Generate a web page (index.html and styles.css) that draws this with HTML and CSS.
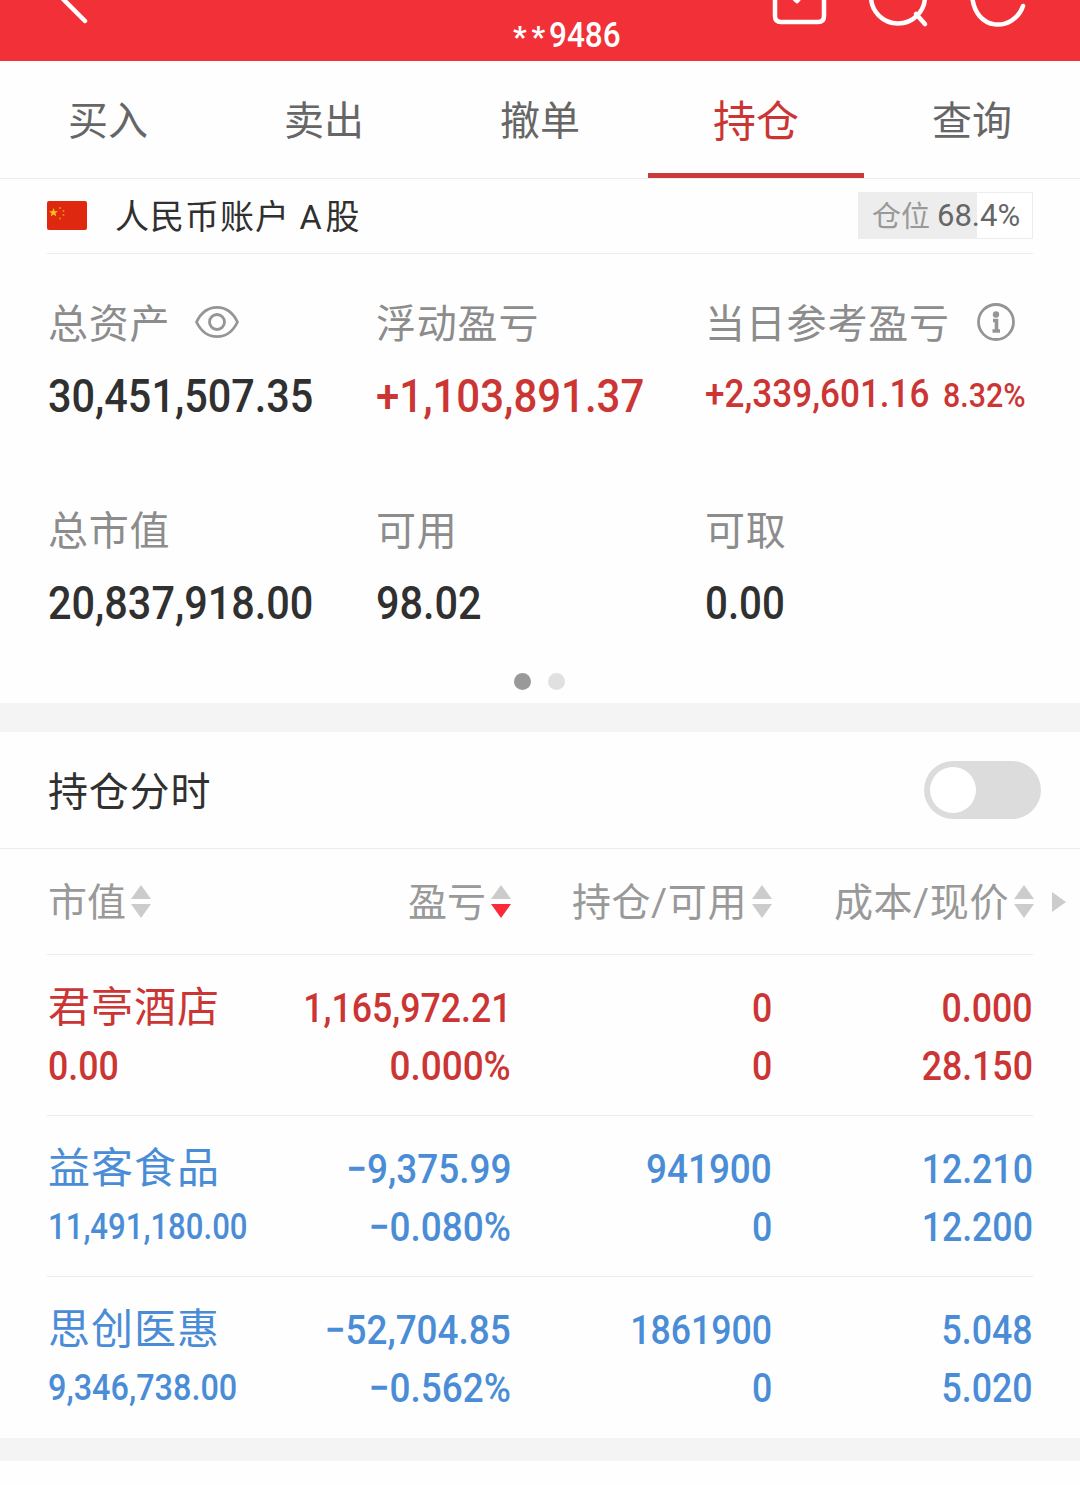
FILE: index.html
```
<!DOCTYPE html>
<html lang="zh-CN">
<head>
    <meta charset="UTF-8" />
    <title>持仓</title>
    <link rel="stylesheet" href="styles.css">
</head>
<body>
    <header class="top-bar">
        <svg class="back" width="48" height="30" viewBox="48 0 48 30"><path d="M49 -15L85 21" /></svg>
        <div class="account-no"><span class="stars">**</span><span class="num">9486</span></div>
        <div class="top-icons">
            <svg width="58" height="30" viewBox="771 0 58 30"><path d="M776 -10V16Q776 22 782 22H819Q825 22 825 16V-10M785 -11L798 1L815 -19" /></svg>
            <svg width="64" height="30" viewBox="867 0 64 30"><circle cx="899" cy="-3.500" r="27" /><path d="M917 14L926 24" /></svg>
            <svg width="60" height="30" viewBox="968 0 60 30"><path d="M972 -6C974 33 1014 32 1023 6" /></svg>
        </div>
    </header>

    <nav class="tabs">
        <a class="tab">买入</a>
        <a class="tab">卖出</a>
        <a class="tab">撤单</a>
        <a class="tab active">持仓</a>
        <a class="tab">查询</a>
    </nav>

    <section class="account">
        <svg class="flag" width="40" height="30" viewBox="0 0 40 30">
            <rect x="0" y="0" width="40" height="29" rx="2" fill="#de2910" />
            <path d="M6.5 7L7.7 10.2H11L8.400 12.2L9.4 15.400L6.5 13.5L3.600 15.400L4.600 12.2L2 10.2H5.300Z" fill="#fcc419" />
            <g fill="#ee8a16"><circle cx="13" cy="7" r="1" /><circle cx="16.5" cy="10" r="1" /><circle cx="16.5" cy="14" r="1" /><circle cx="13" cy="17.500" r="1" /></g>
        </svg>
        <span class="account-name">人民币账户 <span class="market">A股</span></span>
        <div class="position"><span class="position-label">仓位</span><span class="position-value">68.4%</span></div>
    </section>

    <section class="summary">
        <div class="cell">
            <div class="label"><span>总资产</span>
                <svg class="eye" width="44" height="34" viewBox="0 0 44 34"><path d="M1.500 17C11 -2.500 33 -2.500 42.500 17C33 36.500 11 36.500 1.500 17Z" /><circle cx="22" cy="17" r="7.500" /></svg>
            </div>
            <div class="value"><span class="num">30,451,507.35</span></div>
        </div>
        <div class="cell">
            <div class="label"><span>浮动盈亏</span></div>
            <div class="value red"><span class="num wide">+1,103,891.37</span></div>
        </div>
        <div class="cell">
            <div class="label"><span>当日参考盈亏</span>
                <svg class="info" width="40" height="40" viewBox="0 0 40 40"><circle cx="20" cy="20" r="17.500" /><circle class="dot-i" cx="20" cy="12.500" r="3.200" /><path class="stem-i" d="M17 18.500H20.500V29M16.500 29H24" /></svg>
            </div>
            <div class="value red day"><span class="num">+2,339,601.16</span><span class="num rate">8.32%</span></div>
        </div>
        <div class="cell">
            <div class="label"><span>总市值</span></div>
            <div class="value"><span class="num">20,837,918.00</span></div>
        </div>
        <div class="cell">
            <div class="label"><span>可用</span></div>
            <div class="value"><span class="num">98.02</span></div>
        </div>
        <div class="cell">
            <div class="label"><span>可取</span></div>
            <div class="value"><span class="num short">0.00</span></div>
        </div>
    </section>
    <div class="dots"><i class="on"></i><i></i></div>

    <div class="gap"></div>

    <section class="chart-row">
        <span>持仓分时</span>
        <div class="switch"><i></i></div>
    </section>

    <section class="holdings">
        <div class="row head">
            <div><span>市值</span><svg class="sort" width="20" height="34" viewBox="0 0 20 34"><path d="M10 0L20 14H0Z" /><path d="M10 33L0 19H20Z" /></svg></div>
            <div><span>盈亏</span><svg class="sort desc" width="20" height="34" viewBox="0 0 20 34"><path d="M10 0L20 14H0Z" /><path d="M10 33L0 19H20Z" /></svg></div>
            <div><span class="pair">持仓/可用</span><svg class="sort" width="20" height="34" viewBox="0 0 20 34"><path d="M10 0L20 14H0Z" /><path d="M10 33L0 19H20Z" /></svg></div>
            <div><span class="pair">成本/现价</span><svg class="sort" width="20" height="34" viewBox="0 0 20 34"><path d="M10 0L20 14H0Z" /><path d="M10 33L0 19H20Z" /></svg><svg class="more" width="14" height="20" viewBox="0 0 14 20"><path d="M0 0L14 10L0 20Z" /></svg></div>
        </div>
        <div class="row red">
            <div><span class="name">君亭酒店</span><span class="num">0.00</span></div>
            <div><span class="num">1,165,972.21</span><span class="num wide">0.000%</span></div>
            <div><span class="num">0</span><span class="num">0</span></div>
            <div><span class="num">0.000</span><span class="num">28.150</span></div>
        </div>
        <div class="row blue">
            <div><span class="name">益客食品</span><span class="num small">11,491,180.00</span></div>
            <div><span class="num wide">−9,375.99</span><span class="num wide">−0.080%</span></div>
            <div><span class="num wide">941900</span><span class="num">0</span></div>
            <div><span class="num">12.210</span><span class="num">12.200</span></div>
        </div>
        <div class="row blue">
            <div><span class="name">思创医惠</span><span class="num small wide">9,346,738.00</span></div>
            <div><span class="num wide">−52,704.85</span><span class="num wide">−0.562%</span></div>
            <div><span class="num">1861900</span><span class="num">0</span></div>
            <div><span class="num">5.048</span><span class="num">5.020</span></div>
        </div>
    </section>

    <div class="gap bottom"></div>
</body>
</html>
```
FILE: styles.css
```
* {
    box-sizing: border-box;
}
body {
    margin: 0;
    background-color: #fefefe;
    color: #303030;
    font-family: Roboto, "Noto Sans CJK SC", sans-serif;
}
svg {
    display: block;
    flex: none;
}
/* figures are set slightly condensed */
.num {
    display: inline-block;
    font-family: Roboto, sans-serif;
    font-weight: 500;
    white-space: nowrap;
    transform: scaleX(0.9);
    transform-origin: left center;
}
.red {
    color: #cb3534;
}
.blue {
    color: #4a8dd6;
}

.top-bar {
    display: flex;
    align-items: flex-start;
    height: 61px;
    padding: 0 52px 0 48px;
    background-color: #f23038;
    color: #fff;
}
.top-bar svg {
    fill: none;
    stroke: #fff;
    stroke-width: 4.5;
    stroke-linecap: round;
    stroke-linejoin: round;
}
.account-no {
    display: flex;
    margin-left: 417px;
    width: 120px;
    padding-top: 15px;
    font-size: 35px;
    line-height: 42px;
}
.stars {
    width: 36px;
    font-weight: 700;
    font-size: 30px;
    line-height: 44px;
    letter-spacing: 5px;
}
.top-icons {
    display: flex;
    gap: 38px;
    margin-left: auto;
}

.tabs {
    display: grid;
    grid-template-columns: repeat(5, 1fr);
    height: 118px;
    border-bottom: 1px solid #ececec;
}
.tab {
    height: 117px;
    text-align: center;
    font-size: 40px;
    line-height: 122px;
    color: #666;
}
.tab.active {
    font-size: 43px;
    color: #cb3534;
    border-bottom: 5px solid #cb3a39;
}

.account {
    display: flex;
    align-items: center;
    height: 75px;
    margin: 0 47px;
    padding-bottom: 1px;
    border-bottom: 1px solid #ebebeb;
}
.account-name {
    margin-left: 28px;
    padding-bottom: 2px;
    font-size: 34px;
    letter-spacing: 1px;
}
.market {
    letter-spacing: 4px;
}
.position {
    display: flex;
    align-items: center;
    width: 175px;
    height: 47px;
    margin-left: auto;
    padding-left: 13px;
    border: 1px solid #ededed;
    background: linear-gradient(to right, #ededed 68.4%, #fff 68.4%);
    font-size: 31px;
    color: #666;
}
.position-label {
    margin-right: 7px;
    padding-bottom: 3px;
    font-size: 29px;
    color: #999;
}

.summary {
    display: grid;
    grid-template-columns: 328px 329px 1fr;
    row-gap: 75px;
    padding: 40px 0 0 48px;
}
.label {
    display: flex;
    align-items: center;
    height: 56px;
    font-size: 40px;
    letter-spacing: 0.8px;
    color: #8c8c8c;
}
.label span {
    padding-bottom: 3px;
}
.label svg {
    fill: none;
    stroke: #959595;
    stroke-width: 2.8;
}
.eye {
    margin-left: 25px;
}
.info {
    margin-left: 26px;
}
.label .dot-i {
    fill: #959595;
    stroke: none;
}
.label .stem-i {
    stroke-width: 3.6;
}
.value {
    height: 60px;
    margin-top: 16px;
    font-size: 46px;
    line-height: 60px;
    white-space: nowrap;
}
.value .wide {
    transform: scaleX(0.912);
}
.value .short {
    transform: scaleX(0.875);
}
.value.day {
    display: flex;
    font-size: 39px;
    line-height: 56px;
}
.value .rate {
    margin-left: -11px;
    font-size: 33px;
    line-height: 60px;
    transform: scaleX(0.92);
}
.dots {
    display: flex;
    justify-content: center;
    gap: 17px;
    height: 70px;
    padding: 40px 2px 0 0;
}
.dots i {
    width: 17px;
    height: 17px;
    border-radius: 50%;
    background-color: #e0e0e0;
}
.dots .on {
    background-color: #999;
}

.gap {
    height: 29px;
    background-color: #f4f4f4;
}
.gap.bottom {
    height: 23px;
}

.chart-row {
    display: flex;
    align-items: center;
    justify-content: space-between;
    height: 117px;
    padding: 0 39px 0 48px;
    border-bottom: 1px solid #ebebeb;
    font-size: 40px;
    letter-spacing: 0.8px;
}
.chart-row span {
    padding-bottom: 3px;
}
.switch {
    width: 117px;
    height: 58px;
    padding: 6px;
    border-radius: 29px;
    background-color: #dcdcdc;
}
.switch i {
    display: block;
    width: 46px;
    height: 46px;
    border-radius: 50%;
    background-color: #fff;
}

.row {
    display: grid;
    grid-template-columns: 210px 254px 261px 261px;
    height: 161px;
    margin: 0 47px;
    padding-top: 24px;
    border-bottom: 1px solid #ebebeb;
}
.row:last-child {
    border-bottom: none;
}
.row > div {
    display: flex;
    flex-direction: column;
    align-items: flex-end;
}
.row > div:first-child {
    align-items: flex-start;
    padding-left: 1px;
}
.row .num {
    height: 58px;
    font-size: 41px;
    line-height: 58px;
    transform: scaleX(0.87);
    transform-origin: right center;
}
.row > div:first-child .num {
    transform-origin: left center;
}
.row .num.wide {
    transform: scaleX(0.9);
}
.row .num.small {
    font-size: 36px;
}
.row .num.small:not(.wide) {
    transform: scaleX(0.865);
}
.name {
    height: 58px;
    font-size: 42px;
    line-height: 58px;
    letter-spacing: 1px;
}
.row.head {
    height: 106px;
    padding-top: 0;
    font-size: 39px;
    color: #999;
}
.row.head > div,
.row.head > div:first-child {
    flex-direction: row;
    align-items: center;
    justify-content: flex-end;
    white-space: nowrap;
}
.row.head > div:first-child {
    justify-content: flex-start;
}
.row.head span {
    padding-bottom: 5px;
}
.row.head .pair {
    letter-spacing: 0.6px;
}
.sort {
    margin-left: 5px;
    fill: #ccc;
}
.sort.desc path:last-child {
    fill: #fa2a3b;
}
.more {
    margin: 0 -33px 0 18px;
    fill: #ccc;
}
```
